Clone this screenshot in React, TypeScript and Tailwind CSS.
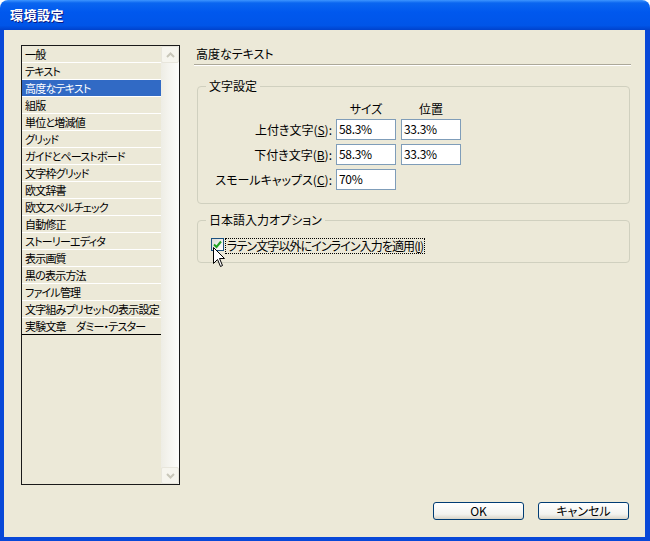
const items = [
  "一般",
  "テキスト",
  "高度なテキスト",
  "組版",
  "単位と増減値",
  "グリッド",
  "ガイドとペーストボード",
  "文字枠グリッド",
  "欧文辞書",
  "欧文スペルチェック",
  "自動修正",
  "ストーリーエディタ",
  "表示画質",
  "黒の表示方法",
  "ファイル管理",
  "文字組みプリセットの表示設定",
  "実験文章　ダミー・テスター",
];

function ScrollButton({ up }: { up: boolean }) {
  return (
    <div className="h-[17px] flex items-center justify-center rounded-[2px] border border-[#E8E6DC] bg-[#F6F5EE]">
      <svg width="9" height="6" viewBox="0 0 9 6">
        <path
          d={up ? "M1 5 L4.5 1.5 L8 5" : "M1 1 L4.5 4.5 L8 1"}
          fill="none"
          stroke="#C9C7BA"
          strokeWidth="2"
        />
      </svg>
    </div>
  );
}

function Field({ value }: { value: string }) {
  return (
    <div className="w-[60px] h-[21px] border border-[#7F9DB9] bg-white flex items-center pl-[2px] pb-[2px] leading-[14px] tracking-[-0.3px]">
      {value}
    </div>
  );
}

function Button({ label }: { label: string }) {
  return (
    <button className="w-[91px] h-[18px] rounded-[3px] border border-[#003C74] bg-[linear-gradient(to_bottom,#FFFFFF,#F3F3EF_70%,#D9D4C8)] flex items-center justify-center leading-[14px]">
      {label}
    </button>
  );
}

export default function App() {
  return (
    <div className="w-[650px] h-[541px] flex flex-col text-[12px] text-black font-['Noto_Sans_CJK_JP','MS_UI_Gothic',sans-serif] [font-feature-settings:'palt'] select-none">
      <div className="h-[30px] shrink-0 rounded-t-[8px] bg-[linear-gradient(to_bottom,#3D95FF_0%,#0A66F0_10%,#0058EE_40%,#0055E8_85%,#0042CC_100%)] flex items-center pl-[10px] pb-[1px]">
        <span className="text-white font-bold text-[13px] tracking-[0.5px] [text-shadow:1px_1px_0_#0A1883]">環境設定</span>
      </div>

      <div className="relative flex-1 flex flex-col bg-[#ECE9D8] border-l-[4px] border-r-[5px] border-b-[4px] border-[#0848D8]">
        <div className="flex pt-[15px] pl-[17px]">
          {/* category list */}
          <div className="w-[159px] h-[440px] border border-[#1A1A1A] flex">
            <div className="w-[139px] flex flex-col">
              {items.map((item, i) => (
                <div
                  key={item}
                  className={
                    "h-[17px] shrink-0 border-b whitespace-nowrap overflow-hidden text-[11px] tracking-[-0.8px] pl-[3px] leading-[16px] " +
                    (i === items.length - 1 ? "border-black " : "border-white ") +
                    (i === 2 ? "bg-[#316AC5] text-white" : "")
                  }
                >
                  {item}
                </div>
              ))}
            </div>
            <div className="w-[18px] flex flex-col bg-[linear-gradient(to_right,#EEEDE5,#FDFDFB)]">
              <ScrollButton up />
              <div className="flex-1" />
              <ScrollButton up={false} />
            </div>
          </div>

          {/* settings panel */}
          <div className="ml-[14px] w-[437px] flex flex-col">
            <div className="h-[20px] flex items-center pl-[2px] pb-[1px] border-b border-[#ACA899] shadow-[0_1px_0_#FFFFFF]">
              高度なテキスト
            </div>

            <fieldset className="mt-[13px] ml-[3px] mr-[1px] border border-[#D0D0BF] rounded-[4px] px-0 pt-[7px] pb-[13px]">
              <legend className="ml-[8px] px-[3px] leading-[16px]">文字設定</legend>
              <div className="flex h-[16px] leading-[16px]">
                <div className="w-[138px]" />
                <div className="w-[60px] text-center">サイズ</div>
                <div className="w-[60px] ml-[5px] text-center">位置</div>
              </div>
              <div className="mt-[2px] flex flex-col gap-[4px]">
                <div className="flex items-center">
                  <div className="w-[134px] text-right">
                    上付き文字(<u>S</u>):
                  </div>
                  <div className="ml-[4px]"><Field value="58.3%" /></div>
                  <div className="ml-[5px]"><Field value="33.3%" /></div>
                </div>
                <div className="flex items-center">
                  <div className="w-[134px] text-right">
                    下付き文字(<u>B</u>):
                  </div>
                  <div className="ml-[4px]"><Field value="58.3%" /></div>
                  <div className="ml-[5px]"><Field value="33.3%" /></div>
                </div>
                <div className="flex items-center">
                  <div className="w-[134px] text-right">
                    スモールキャップス(<u>C</u>):
                  </div>
                  <div className="ml-[4px]"><Field value="70%" /></div>
                </div>
              </div>
            </fieldset>

            <fieldset className="mt-[8px] ml-[3px] mr-[1px] border border-[#D0D0BF] rounded-[4px] px-0 pt-[10px] pb-[8px]">
              <legend className="ml-[8px] px-[3px] leading-[16px]">日本語入力オプション</legend>
              <div className="flex items-start ml-[13px] h-[16px]">
                <div className="w-[13px] h-[13px] border border-[#1C5180] bg-[linear-gradient(135deg,#DCDCD7,#FFFFFF)] flex items-center justify-center">
                  <svg width="9" height="9" viewBox="0 0 9 9">
                    <path d="M1 4.5 L3.5 7 L8 1.5" fill="none" stroke="#21A121" strokeWidth="2" />
                  </svg>
                </div>
                <div className="ml-[1px] h-[16px] border border-dotted border-black px-[1px] leading-[14px] whitespace-nowrap tracking-[-0.9px]">
                  ラテン文字以外にインライン入力を適用(<u>I</u>)
                </div>
              </div>
            </fieldset>
          </div>
        </div>

        <div className="mt-[17px] flex justify-end gap-[14px] pr-[16px]">
          <Button label="OK" />
          <Button label="キャンセル" />
        </div>

        {/* mouse pointer */}
        <svg className="absolute left-[209px] top-[217px]" width="13" height="21" viewBox="0 0 13 21">
          <path
            d="M0.5 0.5 L0.5 16.5 L4.5 12.5 L7.5 19.5 L9.5 18.5 L6.5 11.5 L11.5 11.5 Z"
            fill="#FFFFFF"
            stroke="#000000"
            strokeWidth="1"
          />
        </svg>
      </div>
    </div>
  );
}
